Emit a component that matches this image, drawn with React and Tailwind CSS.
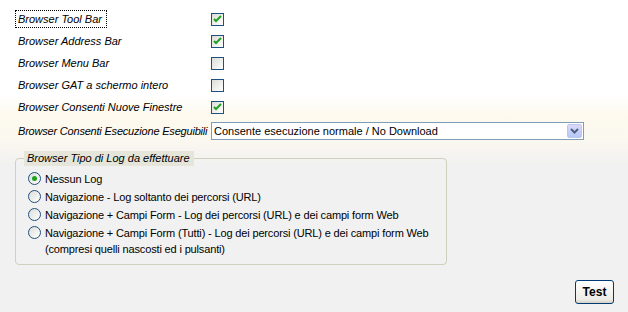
import { useState } from 'react';

const checks = [
    { label: 'Browser Tool Bar', checked: true, focus: true },
    { label: 'Browser Address Bar', checked: true },
    { label: 'Browser Menu Bar', checked: false },
    { label: 'Browser GAT a schermo intero', checked: false },
    { label: 'Browser Consenti Nuove Finestre', checked: true },
];

const logOptions = [
    ['Nessun Log'],
    ['Navigazione - Log soltanto dei percorsi (URL)'],
    ['Navigazione + Campi Form - Log dei percorsi (URL) e dei campi form Web'],
    [
        'Navigazione + Campi Form (Tutti) - Log dei percorsi (URL) e dei campi form Web',
        '(compresi quelli nascosti ed i pulsanti)',
    ],
];

function XpCheck({ checked }) {
    return (
        <span className="w-[13px] h-[13px] border border-[#1c5180] bg-[linear-gradient(135deg,#dcdcd7,#ffffff)] flex items-center justify-center">
            {checked && (
                <svg width="9" height="9" viewBox="0 0 9 9">
                    <path d="M1 4l2 2 5-5" fill="none" stroke="#21a121" strokeWidth="2" />
                </svg>
            )}
        </span>
    );
}

function XpRadio({ checked }) {
    return (
        <span className="w-[13px] h-[13px] rounded-full border border-[#1c5180] bg-[linear-gradient(135deg,#dcdcd7,#ffffff)] flex items-center justify-center shrink-0">
            {checked && <span className="w-[5px] h-[5px] rounded-full bg-[#21a121]" />}
        </span>
    );
}

export default function App() {
    const [log, setLog] = useState(0);

    return (
        <div
            className="w-[628px] h-[312px] flex flex-col bg-[linear-gradient(180deg,#ffffff_0px,#ffffff_95px,#fdf9ee_115px,#fbf8f0_140px,#f1f1f1_165px,#f1f1f1_312px)] text-black text-[11px]"
            style={{ fontFamily: '"Liberation Sans", Arial, sans-serif' }}
        >
            <div className="pt-[8px] pl-[18px] flex flex-col">
                {checks.map((c) => (
                    <div key={c.label} className="h-[22px] flex items-center">
                        <span className="w-[193px] italic whitespace-nowrap">
                            <span
                                className={
                                    c.focus
                                        ? 'outline-1 outline-dotted outline-black outline-offset-[2px] pr-[2px]'
                                        : ''
                                }
                            >
                                {c.label}
                            </span>
                        </span>
                        <XpCheck checked={c.checked} />
                    </div>
                ))}
                <div className="h-[18px] mt-[4px] flex items-center">
                    <span className="w-[193px] italic whitespace-nowrap tracking-[-0.2px]">
                        Browser Consenti Esecuzione Eseguibili
                    </span>
                    <div className="w-[373px] h-[18px] border border-[#7f9db9] bg-white flex items-center">
                        <span className="flex-1 pl-[2px] text-[11px]">
                            Consente esecuzione normale / No Download
                        </span>
                        <span className="w-[15px] h-[14px] mr-[1px] rounded-[2px] bg-[linear-gradient(180deg,#dcd8fb,#b7c8f6)] border border-[#b9c9f0] flex items-center justify-center">
                            <svg width="9" height="6" viewBox="0 0 9 6">
                                <path d="M1 1l3.5 3.5L8 1" fill="none" stroke="#4d6185" strokeWidth="2" />
                            </svg>
                        </span>
                    </div>
                </div>
            </div>

            <fieldset className="ml-[15px] mt-[11px] w-[432px] h-[114px] border border-[#d0d0bf] rounded-[4px] pl-[12px] pt-[2px]">
                <legend className="italic bg-[#e5e5da] px-[3px] -ml-[4px] w-[170px] h-[15px] leading-[15px] whitespace-nowrap">
                    Browser Tipo di Log da effettuare
                </legend>
                <div className="flex flex-col gap-[2px] pt-[3px]">
                    {logOptions.map((o, i) => (
                        <label
                            key={o[0]}
                            className="flex items-start gap-[4px] cursor-pointer"
                            onClick={() => setLog(i)}
                        >
                            <span className="pt-[1px]">
                                <XpRadio checked={log === i} />
                            </span>
                            <span className="flex flex-col leading-[16px] whitespace-nowrap tracking-[-0.15px]">
                                {o.map((line) => (
                                    <span key={line}>{line}</span>
                                ))}
                            </span>
                        </label>
                    ))}
                </div>
            </fieldset>

            <div className="flex justify-end pr-[14px] mt-[15px]">
                <button className="w-[39px] h-[24px] border border-[#003c74] rounded-[3px] bg-[linear-gradient(180deg,#ffffff,#ecebe6_85%,#d6d0c5)] font-bold text-[12px]">
                    Test
                </button>
            </div>
        </div>
    );
}
